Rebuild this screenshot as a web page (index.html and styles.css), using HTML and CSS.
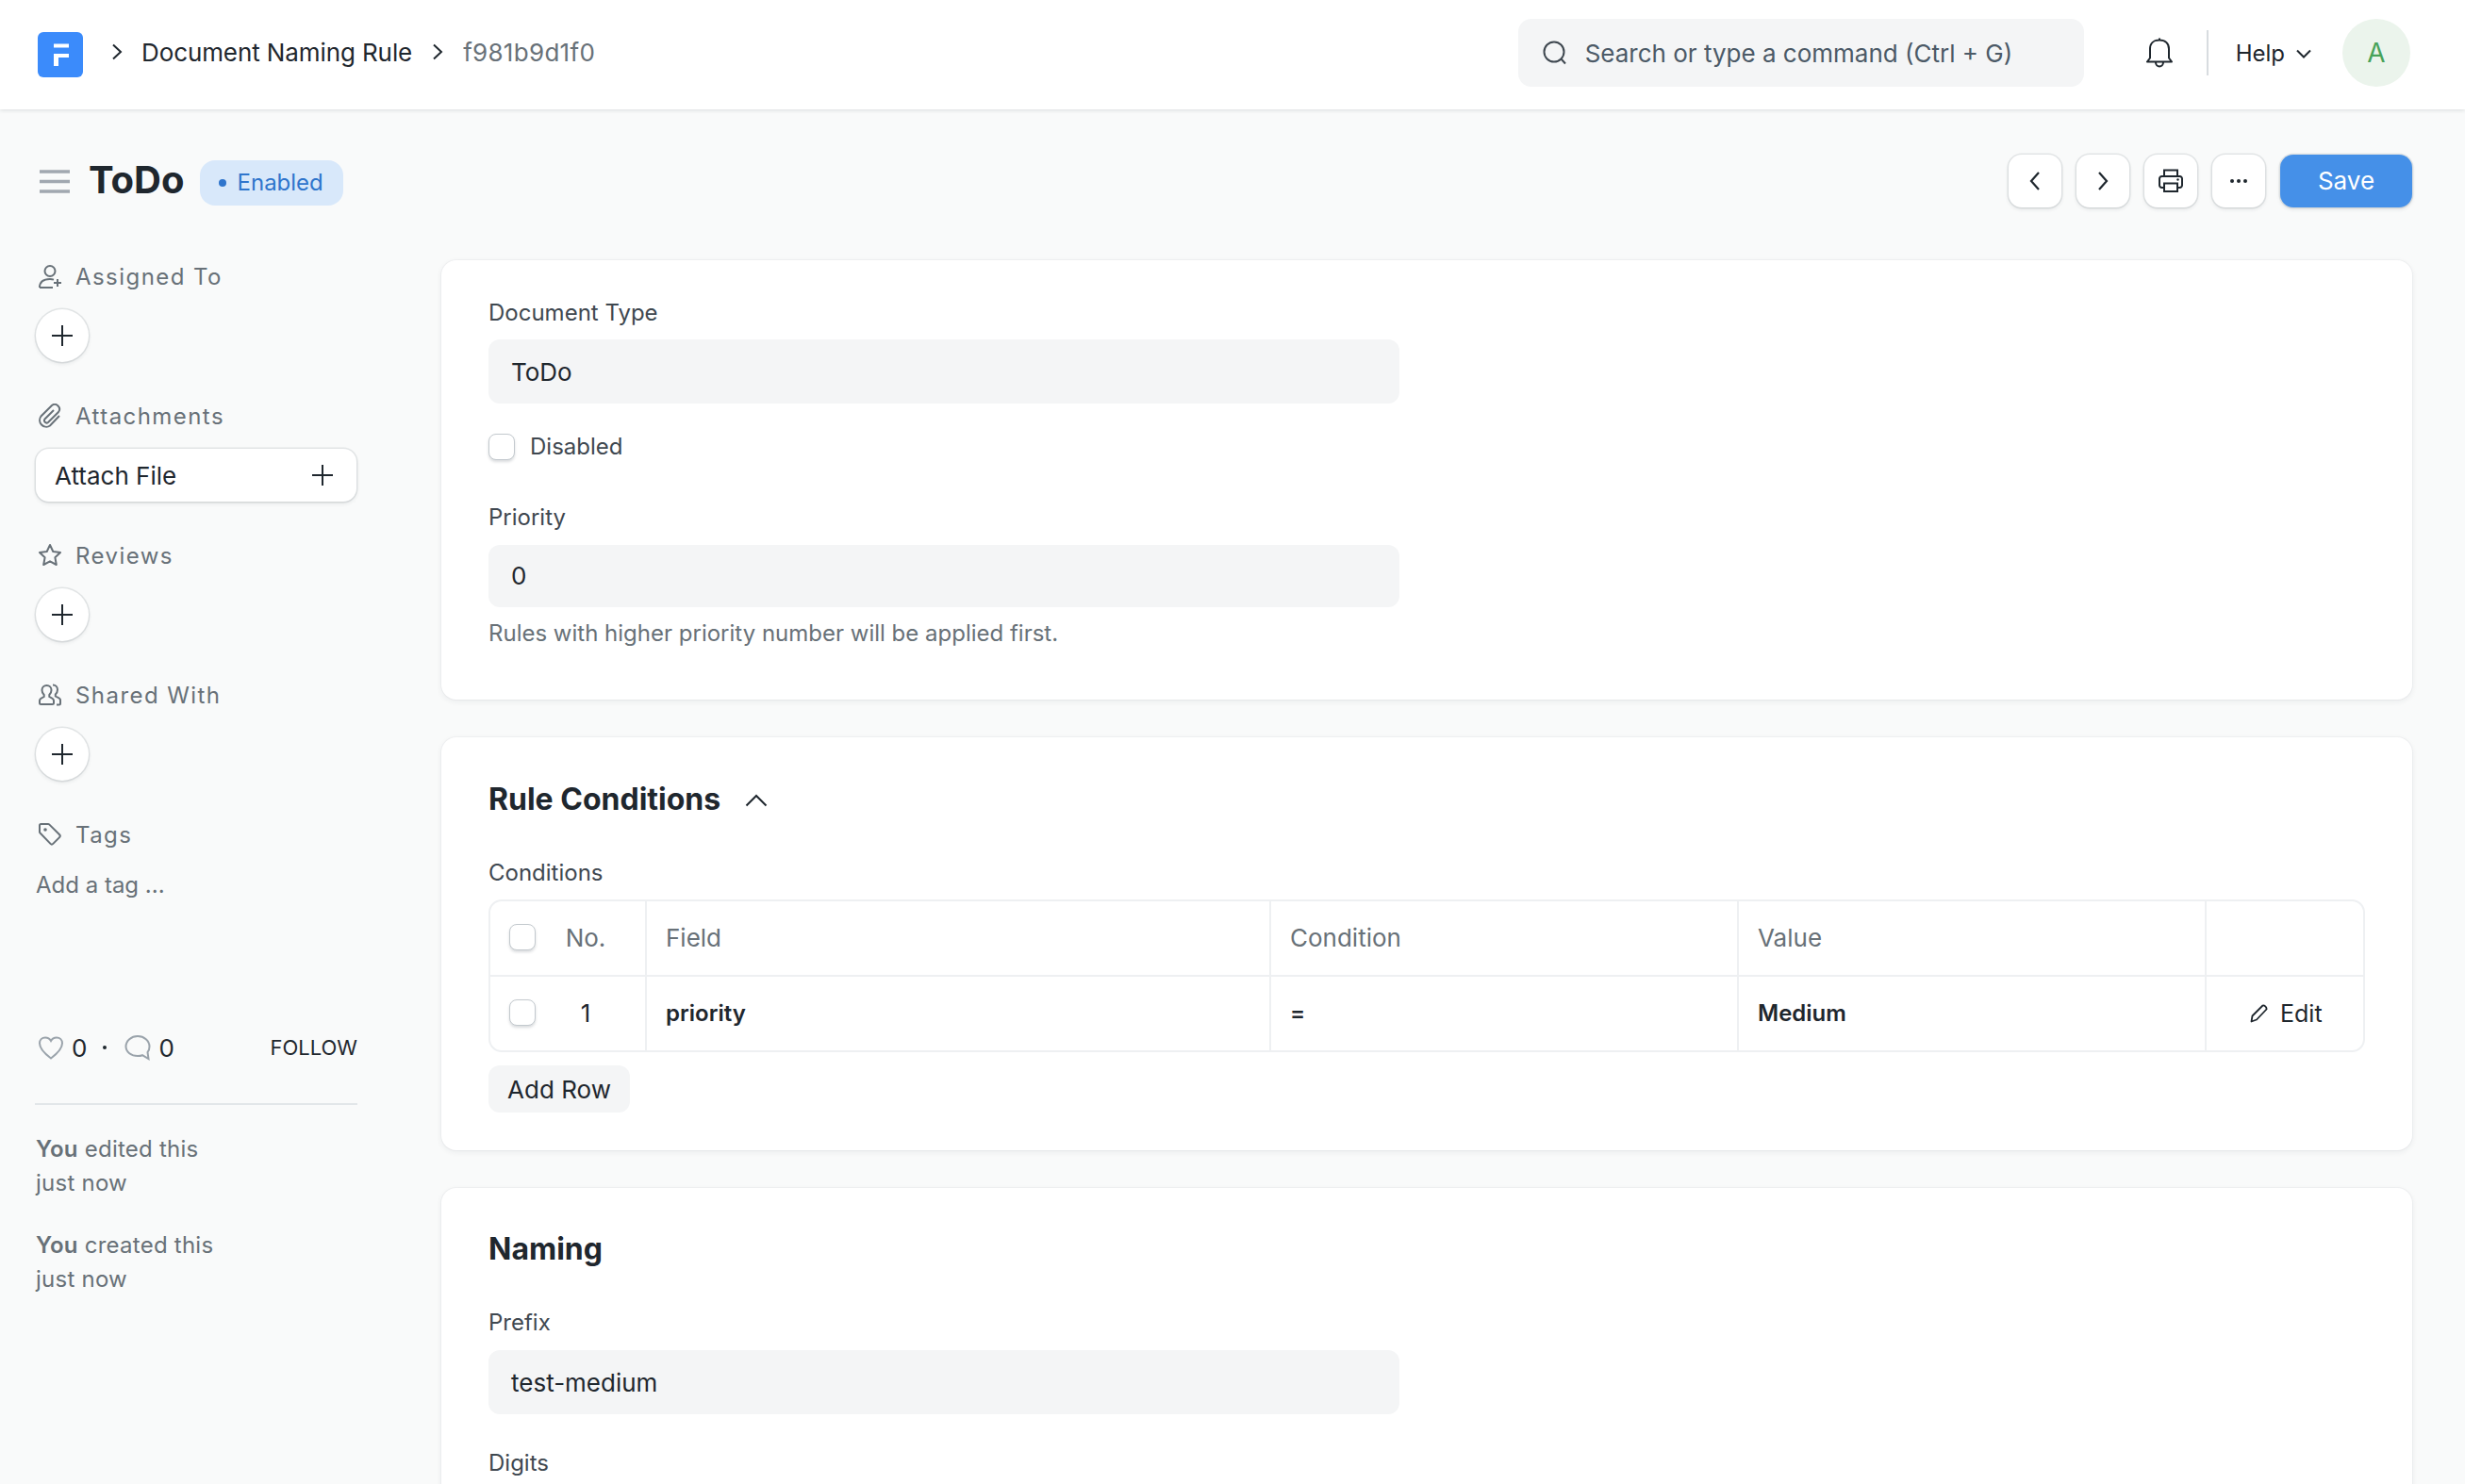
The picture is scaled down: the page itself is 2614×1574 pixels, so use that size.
FILE: index.html
```html
<!DOCTYPE html>
<html lang="en">
<head>
<meta charset="utf-8">
<title>ToDo</title>
<link rel="stylesheet" href="styles.css">
</head>
<body>
<header class="navbar">
  <svg class="logo" viewBox="0 0 48 48"><rect width="48" height="48" rx="6" fill="#3b8bfb"/><path d="M17 12.5h16v4H17zM17 23h16v4H22v9h-5z" fill="#fff"/></svg>
  <nav class="crumbs">
    <svg class="crumb-sep" viewBox="0 0 12 18"><path d="M2 1.500l8 7.500-8 7.500" fill="none" stroke="#1f272e" stroke-width="2"/></svg>
    <span class="crumb">Document Naming Rule</span>
    <svg class="crumb-sep" viewBox="0 0 12 18"><path d="M2 1.500l8 7.500-8 7.500" fill="none" stroke="#1f272e" stroke-width="2"/></svg>
    <span class="crumb crumb-muted">f981b9d1f0</span>
  </nav>
  <div class="search">
    <svg class="search-icon" viewBox="0 0 26 26"><circle cx="12" cy="12" r="10.5" fill="none" stroke="#3f4850" stroke-width="2"/><path d="M19.5 19.5l4.5 5" fill="none" stroke="#3f4850" stroke-width="2"/></svg>
    <span>Search or type a command (Ctrl + G)</span>
  </div>
  <svg class="bell" viewBox="0 0 30 34"><path d="M2 26.5h26l-3-4V13C25 7 21 3.500 15 3.500S5 7 5 13v9.500z M15 3.500V1.500 M11 27c0 6 8 6 8 0" fill="none" stroke="#1f272e" stroke-width="2" stroke-linejoin="round"/></svg>
  <span class="nav-divider"></span>
  <span class="help">Help<svg class="help-caret" viewBox="0 0 16 10"><path d="M1 1.500l7 7 7-7" fill="none" stroke="#1f272e" stroke-width="2"/></svg></span>
  <span class="avatar">A</span>
</header>

<section class="page-head">
  <svg class="menu-icon" viewBox="0 0 32 26"><path d="M0 3h32M0 13.500h32M0 24h32" stroke="#a1a8b0" stroke-width="3.600"/></svg>
  <h1 class="page-title">ToDo</h1>
  <span class="pill"><span class="pill-dot"></span>Enabled</span>
  <div class="actions">
    <button class="btn btn-icon"><svg class="ico-24" viewBox="0 0 24 24"><path d="M16 3l-8 9 8 9" fill="none" stroke="#1f272e" stroke-width="2.200"/></svg></button>
    <button class="btn btn-icon"><svg class="ico-24" viewBox="0 0 24 24"><path d="M8 3l8 9-8 9" fill="none" stroke="#1f272e" stroke-width="2.200"/></svg></button>
    <button class="btn btn-icon"><svg class="ico-28" viewBox="0 0 28 28"><path d="M7 9V2.500h14V9 M7 21H4.500A2.500 2.500 0 0 1 2 18.500v-7A2.500 2.500 0 0 1 4.500 9h19a2.500 2.500 0 0 1 2.500 2.500v7a2.500 2.500 0 0 1-2.500 2.500H21 M7 16.500h14v8.500H7z" fill="none" stroke="#1f272e" stroke-width="2"/><circle cx="21.500" cy="12.500" r="1.200" fill="#1f272e"/></svg></button>
    <button class="btn btn-icon"><svg class="ico-24" viewBox="0 0 24 24"><circle cx="5" cy="12" r="2" fill="#1f272e"/><circle cx="12" cy="12" r="2" fill="#1f272e"/><circle cx="19" cy="12" r="2" fill="#1f272e"/></svg></button>
    <button class="btn btn-primary">Save</button>
  </div>
</section>

<div class="layout">
  <aside class="sidebar">
    <div class="side-section">
      <div class="side-label"><svg class="side-icon" viewBox="0 0 26 26"><circle cx="13" cy="7.500" r="5.500" fill="none" stroke="#687178" stroke-width="2"/><path d="M2 25c0-6 4-9 11-9 2 0 3 .3 4 .6M2 25h14M21 16v8M17 20h8" fill="none" stroke="#687178" stroke-width="2"/></svg>Assigned To</div>
      <button class="btn-circle"><svg class="plus" viewBox="0 0 24 24"><path d="M12 1v22M1 12h22" stroke="#1f272e" stroke-width="2"/></svg></button>
    </div>
    <div class="side-section">
      <div class="side-label"><svg class="side-icon" viewBox="0 0 26 26"><path d="M17 7l-9.500 9.500a2.500 2.500 0 0 0 3.500 3.500L22 9a5 5 0 0 0-7-7L3.500 13.500a7 7 0 0 0 9.500 10L23 13" fill="none" stroke="#687178" stroke-width="2"/></svg>Attachments</div>
      <button class="btn-attach">Attach File<svg class="plus" viewBox="0 0 24 24"><path d="M12 1v22M1 12h22" stroke="#1f272e" stroke-width="2"/></svg></button>
    </div>
    <div class="side-section">
      <div class="side-label"><svg class="side-icon" viewBox="0 0 26 26"><path d="M13 2l3.300 7 7.700 1-5.600 5.300 1.400 7.700L13 19.300 6.200 23l1.400-7.700L2 10l7.700-1z" fill="none" stroke="#687178" stroke-width="2" stroke-linejoin="round"/></svg>Reviews</div>
      <button class="btn-circle"><svg class="plus" viewBox="0 0 24 24"><path d="M12 1v22M1 12h22" stroke="#1f272e" stroke-width="2"/></svg></button>
    </div>
    <div class="side-section">
      <div class="side-label"><svg class="side-icon" viewBox="0 0 26 26"><path d="M9.500 3c3 0 5 2.200 5 5 0 2.500-1.200 4-2.200 5v2c1 .7 4.700 1.500 4.700 4v2.500a1.500 1.500 0 0 1-1.500 1.500h-12A1.500 1.500 0 0 1 2 21.500V19c0-2.500 3.700-3.300 4.700-4v-2c-1-1-2.200-2.500-2.200-5 0-2.800 2-5 5-5z M16 2.500c3 0 5 2.200 5 5 0 2.500-1.200 4-2.200 5v2c1 .7 5.200 1.500 5.200 4V22a1.500 1.500 0 0 1-1.500 1.500H20" fill="none" stroke="#687178" stroke-width="2"/></svg>Shared With</div>
      <button class="btn-circle"><svg class="plus" viewBox="0 0 24 24"><path d="M12 1v22M1 12h22" stroke="#1f272e" stroke-width="2"/></svg></button>
    </div>
    <div class="side-section side-tags">
      <div class="side-label"><svg class="side-icon" viewBox="0 0 26 26"><path d="M2 3.500A1.500 1.500 0 0 1 3.500 2h7.500a2 2 0 0 1 1.400.6l10.700 10.700a2 2 0 0 1 0 2.800l-6.800 6.800a2 2 0 0 1-2.800 0L2.800 11.700A2 2 0 0 1 2 10.300z" fill="none" stroke="#687178" stroke-width="2"/><circle cx="8" cy="8" r="1.800" fill="#687178"/></svg>Tags</div>
      <div class="add-tag">Add a tag ...</div>
    </div>
    <div class="like-row">
      <svg class="like-icon" viewBox="0 0 28 26"><path d="M14 24.500C8 20 2 15 2 8.500 2 5 4.500 2.500 8 2.500c2.500 0 4.800 1.300 6 3.500 1.200-2.200 3.500-3.500 6-3.500 3.500 0 6 2.500 6 6 0 6.500-6 11.500-12 16z" fill="none" stroke="#9aa3ab" stroke-width="2"/></svg>
      <span class="like-count">0</span>
      <span class="like-dot"></span>
      <svg class="like-icon" viewBox="0 0 28 28"><path d="M14 2c6.800 0 12.500 4.700 12.500 11 0 2.500-.8 4.500-2 6l1 7-6.500-3.800c-1.500.6-3 .8-5 .8C7.200 23 1.500 18.800 1.500 13 1.500 6.700 7.200 2 14 2z" fill="none" stroke="#9aa3ab" stroke-width="2"/></svg>
      <span class="like-count">0</span>
      <span class="follow">FOLLOW</span>
    </div>
    <hr class="side-rule">
    <p class="activity"><b>You</b> edited this<br>just now</p>
    <p class="activity"><b>You</b> created this<br>just now</p>
  </aside>

  <main class="content">
    <section class="card card-basic">
      <div class="label">Document Type</div>
      <div class="input">ToDo</div>
      <div class="check-row"><span class="checkbox"></span><span class="label">Disabled</span></div>
      <div class="label label-priority">Priority</div>
      <div class="input input-short">0</div>
      <div class="help-text">Rules with higher priority number will be applied first.</div>
    </section>

    <section class="card card-conditions">
      <div class="section-head"><h2 class="section-title">Rule Conditions</h2><svg class="collapse" viewBox="0 0 24 14"><path d="M1.500 12.500L12 2l10.500 10.500" fill="none" stroke="#1f272e" stroke-width="2"/></svg></div>
      <div class="label label-table">Conditions</div>
      <div class="grid-table">
        <div class="grid-row grid-head">
          <div class="cell cell-no"><span class="checkbox"></span><span class="no">No.</span></div>
          <div class="cell">Field</div>
          <div class="cell">Condition</div>
          <div class="cell">Value</div>
          <div class="cell cell-last"></div>
        </div>
        <div class="grid-row grid-body">
          <div class="cell cell-no"><span class="checkbox"></span><span class="no">1</span></div>
          <div class="cell">priority</div>
          <div class="cell">=</div>
          <div class="cell">Medium</div>
          <div class="cell cell-last cell-edit"><svg class="pencil" viewBox="0 0 20 20"><path d="M1.500 18.500l1-6L13.500 1.500c1.500-.8 4.500 2 4 4L7 16.500z" fill="none" stroke="#1f272e" stroke-width="1.800" stroke-linejoin="round"/></svg>Edit</div>
        </div>
      </div>
      <button class="btn-add">Add Row</button>
    </section>

    <section class="card card-naming">
      <div class="section-head"><h2 class="section-title">Naming</h2></div>
      <div class="label label-prefix">Prefix</div>
      <div class="input">test-medium</div>
      <div class="label label-digits">Digits</div>
    </section>
  </main>
</div>
</body>
</html>
```
FILE: styles.css
```css
* { box-sizing: border-box; }
html, body { margin: 0; height: 1574px; overflow: hidden; }
body { background: #f9fafa; color: #1f272e; font-family: Inter, "Liberation Sans", sans-serif; font-size: 26px; }
button { font-family: inherit; border: 0; padding: 0; background: #fff; color: inherit; }
svg { display: block; flex: none; }

.navbar { height: 116px; background: #fff; box-shadow: 0 1px 4px rgba(25, 39, 52, .14); display: flex; align-items: center; padding: 0 58px 4px 40px; position: relative; }
.logo { width: 48px; height: 48px; margin-top: 4px; }
.crumbs { display: flex; align-items: center; margin-top: -2px; font-size: 26px; }
.crumb { letter-spacing: -.1px; }
.crumb-sep { width: 12px; height: 18px; margin-left: 30px; margin-right: 20px; }
.crumb + .crumb-sep { margin-left: 21px; margin-right: 21px; }
.crumb-muted { color: #687178; letter-spacing: .3px; }
.search { margin-left: auto; width: 600px; height: 72px; background: #f4f5f6; border-radius: 14px; display: flex; align-items: center; padding-left: 26px; color: #4c5a67; }
.search-icon { width: 26px; height: 26px; margin-right: 19px; }
.bell { width: 30px; height: 34px; margin-left: 65px; }
.nav-divider { width: 2px; height: 48px; background: #d8dce0; margin-left: 35px; }
.help { display: flex; align-items: center; margin-left: 29px; font-size: 24px; }
.help-caret { width: 16px; height: 10px; margin-left: 12px; margin-top: 2px; }
.avatar { width: 72px; height: 72px; border-radius: 50%; background: #ebf4ec; color: #48a35a; display: flex; align-items: center; justify-content: center; margin-left: 33px; font-size: 28px; }

.page-head { box-sizing: content-box; height: 57px; padding: 47px 56px 0 42px; display: flex; align-items: center; }
.menu-icon { width: 32px; height: 26px; }
.page-title { margin: -2px 0 0 20px; font-size: 40px; font-weight: 700; line-height: 56px; }
.pill { margin: 4px 0 0 16px; height: 48px; width: 152px; background: #d8e8fa; color: #2f75cc; border-radius: 16px; font-size: 24px; display: flex; align-items: center; padding-left: 20px; }
.pill-dot { width: 8px; height: 8px; border-radius: 50%; background: #2f75cc; margin-right: 12px; }
.actions { margin-left: auto; display: flex; gap: 16px; }
.btn { height: 56px; border-radius: 14px; box-shadow: 0 0 0 1.500px rgba(25, 39, 52, .09), 0 2px 4px rgba(25, 39, 52, .1); display: flex; align-items: center; justify-content: center; }
.btn-icon { width: 56px; }
.ico-24 { width: 24px; height: 24px; }
.ico-28 { width: 28px; height: 28px; }
.btn-primary { width: 140px; background: #4590e8; color: #fff; font-size: 26px; }

.layout { display: grid; grid-template-columns: 342px 2090px; column-gap: 89px; padding: 56px 0 0 37px; }
.sidebar { display: flex; flex-direction: column; }
.side-section { margin-bottom: 39px; }
.side-label { height: 34px; display: flex; align-items: center; color: #687178; font-size: 24px; letter-spacing: .06em; font-weight: 400; margin-bottom: 18px; }
.side-icon { width: 26px; height: 26px; margin: 0 14px 0 3px; }
.btn-circle { width: 56px; height: 56px; margin: 1px; border-radius: 50%; box-shadow: 0 0 0 1.500px rgba(25, 39, 52, .09), 0 2px 4px rgba(25, 39, 52, .1); display: flex; align-items: center; justify-content: center; }
.plus { width: 24px; height: 24px; }
.btn-attach { width: 340px; height: 56px; margin: 1px; border-radius: 14px; box-shadow: 0 0 0 1.500px rgba(25, 39, 52, .09), 0 2px 4px rgba(25, 39, 52, .1); display: flex; align-items: center; justify-content: space-between; padding: 0 24px 0 20px; font-size: 26px; }
.side-tags { margin-bottom: 0; }
.side-tags .side-label { margin-bottom: 19px; }
.add-tag { height: 36px; line-height: 36px; font-size: 24px; color: #687178; padding-left: 1px; }
.like-row { display: flex; align-items: center; height: 36px; margin-top: 136px; padding-left: 3px; }
.like-icon { width: 28px; height: 28px; }
.like-count { margin-left: 8px; font-size: 26px; }
.like-dot { width: 4px; height: 4px; border-radius: 50%; background: #1f272e; margin: 0 19px 0 17px; }
.follow { margin-left: auto; font-size: 22px; color: #1f272e; }
.side-rule { width: 342px; height: 2px; margin: 41px 0 29px; border: 0; background: #e2e6e9; }
.activity { margin: 0 0 30px 1px; font-size: 24px; line-height: 36px; color: #687178; letter-spacing: .01em; }
.activity b { font-weight: 600; }

.content { display: flex; flex-direction: column; gap: 40px; }
.card { background: #fff; border-radius: 16px; box-shadow: 0 0 0 1px rgba(25, 39, 52, .03), 0 2px 6px rgba(25, 39, 52, .07); padding: 0 50px; }
.label { font-size: 24px; line-height: 36px; color: #3f4850; }
.input { height: 68px; background: #f4f5f6; border-radius: 12px; width: 966px; padding-left: 24px; display: flex; align-items: center; font-size: 26px; }
.input-short { height: 66px; padding-bottom: 2px; }
.card-basic { height: 466px; padding-top: 38px; }
.card-basic .input { margin-top: 10px; }
.check-row { display: flex; align-items: center; height: 36px; margin-top: 28px; }
.check-row .label { margin-left: 16px; }
.checkbox { width: 28px; height: 28px; flex: none; background: #fff; border-radius: 8px; border: 1.500px solid #c3c9ce; box-shadow: 0 2px 3px rgba(25, 39, 52, .16); display: block; }
.label-priority { margin-top: 39px; }
.card-basic .input-short { margin-top: 11px; }
.help-text { margin-top: 10px; font-size: 24px; line-height: 36px; color: #687178; }

.card-conditions { height: 438px; padding-top: 41px; }
.section-head { display: flex; align-items: center; height: 48px; }
.section-title { margin: 0; font-size: 32px; font-weight: 700; }
.collapse { width: 24px; height: 14px; margin-left: 26px; margin-top: 4px; }
.label-table { margin-top: 37px; }
.grid-table { margin-top: 10px; border: 2px solid #eef0f2; border-radius: 14px; height: 162px; overflow: hidden; }
.grid-row { display: grid; grid-template-columns: 166px 662px 496px 496px 1fr; height: 78px; }
.grid-head { height: 80px; border-bottom: 2px solid #eef0f2; color: #687178; }
.grid-head .cell { padding-bottom: 2px; }
.grid-body { font-weight: 600; font-size: 24px; }
.cell { border-right: 2px solid #eef0f2; padding-left: 20px; display: flex; align-items: center; }
.grid-body .cell { padding-bottom: 2px; }
.cell-last { border-right: 0; }
.cell-no { padding-left: 20px; font-weight: 400; font-size: 26px; }
.no { flex: 1; text-align: center; padding-right: 10px; }
.grid-body .cell-edit { font-weight: 400; font-size: 25px; padding: 0 0 0 46px; }
.pencil { width: 20px; height: 20px; margin-right: 12px; }
.btn-add { display: block; margin-top: 14px; width: 150px; height: 50px; background: #f4f5f6; border-radius: 12px; font-size: 26px; }

.card-naming { height: 420px; padding-top: 40px; }
.label-prefix { margin-top: 37px; margin-bottom: 11px; }
.label-digits { margin-top: 34px; }
```
